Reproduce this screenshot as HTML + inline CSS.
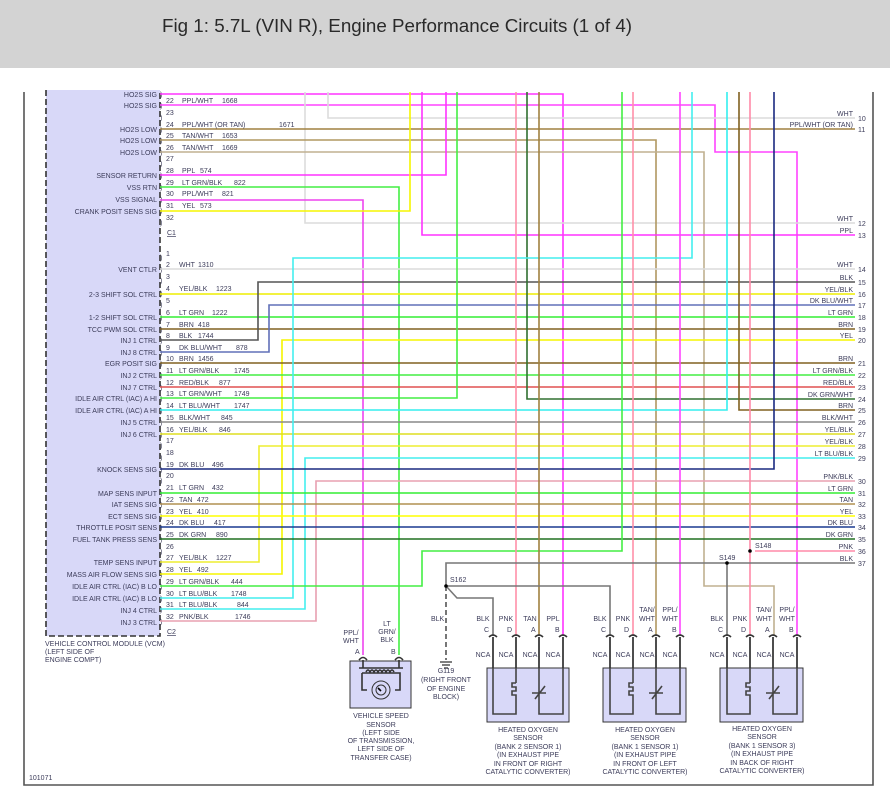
<!DOCTYPE html>
<html><head><meta charset="utf-8"><style>
body{margin:0;background:#fff;width:890px;height:801px;overflow:hidden}
.hd{position:absolute;left:0;top:0;width:890px;height:68px;background:#d3d3d3}
.hd span{position:absolute;left:162px;top:15px;font:18.8px "Liberation Sans",sans-serif;color:#2a2a2a}
svg{position:absolute;left:0;top:0}
text{font-family:"Liberation Sans",sans-serif;font-size:7px;fill:#3c3c5a}
.l{text-anchor:end;fill:#4a4a5a}
.c{text-anchor:middle}
.p{font-size:8px;fill:#333}
path{fill:none;stroke-width:1.6}
</style></head><body>
<div class="hd"><span>Fig 1: 5.7L (VIN R), Engine Performance Circuits (1 of 4)</span></div>
<svg width="890" height="801" viewBox="0 0 890 801">
<rect x="46" y="90" width="114" height="546" fill="#d8d8f8"/>
<path d="M46 90V636H160V90" stroke="#333" stroke-width="1.3" stroke-dasharray="6,3"/>
<path d="M24 92V785H873V92" stroke="#555" stroke-width="1"/>
<g class="p">
<text x="160" y="97">)</text><text x="160" y="108">)</text><text x="160" y="120">)</text><text x="160" y="132">)</text><text x="160" y="143">)</text><text x="160" y="155">)</text><text x="160" y="166">)</text><text x="160" y="178">)</text><text x="160" y="190">)</text><text x="160" y="202">)</text><text x="160" y="213">)</text><text x="160" y="225">)</text>
<text x="160" y="260">)</text><text x="160" y="272">)</text><text x="160" y="283">)</text><text x="160" y="296">)</text><text x="160" y="307">)</text><text x="160" y="320">)</text><text x="160" y="332">)</text><text x="160" y="343">)</text><text x="160" y="355">)</text><text x="160" y="366">)</text><text x="160" y="378">)</text><text x="160" y="390">)</text><text x="160" y="401">)</text><text x="160" y="413">)</text><text x="160" y="425">)</text><text x="160" y="437">)</text><text x="160" y="448">)</text><text x="160" y="460">)</text><text x="160" y="472">)</text><text x="160" y="483">)</text><text x="160" y="496">)</text><text x="160" y="507">)</text><text x="160" y="519">)</text><text x="160" y="530">)</text><text x="160" y="542">)</text><text x="160" y="554">)</text><text x="160" y="565">)</text><text x="160" y="577">)</text><text x="160" y="589">)</text><text x="160" y="601">)</text><text x="160" y="612">)</text><text x="160" y="624">)</text>
</g>
<g>
<path d="M160 94H563V635" stroke="#ff33ff" stroke-width="2.2"/>
<path d="M160 105H715V152H797V635" stroke="#ff44ff"/>
<path d="M328 92V118H855" stroke="#dcdcdc" stroke-width="2"/>
<path d="M305 92V223H855" stroke="#dcdcdc" stroke-width="2"/>
<path d="M160 129H855" stroke="#a08040"/>
<path d="M160 140H656V635" stroke="#b09860"/>
<path d="M160 152H704V586H774V635" stroke="#c0b090"/>
<path d="M160 175H446V92" stroke="#ff33ff"/>
<path d="M422 92V235H855" stroke="#ff33ff" stroke-width="2.2"/>
<path d="M160 187H399V655" stroke="#44ee44" stroke-width="2"/>
<path d="M160 200H363V655" stroke="#ee44ee"/>
<path d="M160 211H410V92" stroke="#f5f500" stroke-width="2"/>
<path d="M160 269H855" stroke="#dcdcdc" stroke-width="2"/>
<path d="M160 294H855" stroke="#eeee00" stroke-width="2"/>
<path d="M160 317H855" stroke="#33ee33" stroke-width="2.2"/>
<path d="M160 329H855" stroke="#806020"/>
<path d="M160 340H258V282H855" stroke="#555"/>
<path d="M160 352H269V305H855" stroke="#6070b8" stroke-width="2"/>
<path d="M160 574H282V340H855" stroke="#f5f500" stroke-width="2"/>
<path d="M160 363H855" stroke="#806020" stroke-width="2"/>
<path d="M160 375H855" stroke="#44ee44" stroke-width="2"/>
<path d="M160 387H855" stroke="#e05050" stroke-width="2"/>
<path d="M160 398H457V92" stroke="#44ee44" stroke-width="2"/>
<path d="M855 399H527V92" stroke="#307030"/>
<path d="M160 410H727V92" stroke="#33eeee" stroke-width="2"/>
<path d="M855 410H739V92" stroke="#806020" stroke-width="2"/>
<path d="M160 422H855" stroke="#888"/>
<path d="M160 434H855" stroke="#dddd20" stroke-width="2"/>
<path d="M160 562H259V446H855" stroke="#eeee30" stroke-width="2"/>
<path d="M160 598H293V258H692V92" stroke="#44eeee" stroke-width="2"/>
<path d="M160 609H305V458H855" stroke="#44eeee" stroke-width="2"/>
<path d="M160 469H774V92" stroke="#1a2a80" stroke-width="2"/>
<path d="M160 621H316V481H855" stroke="#e8a0b0" stroke-width="2"/>
<path d="M160 493H855" stroke="#33ee33" stroke-width="2"/>
<path d="M160 504H855" stroke="#b09050"/>
<path d="M160 516H855" stroke="#ffff00" stroke-width="2"/>
<path d="M160 527H855" stroke="#1a3a90" stroke-width="2"/>
<path d="M160 539H855" stroke="#207020" stroke-width="2"/>
<path d="M160 586H422V551H622V92" stroke="#44ee44" stroke-width="2"/>
<path d="M516 92V635" stroke="#ff90a8" stroke-width="2"/>
<path d="M539 92V635" stroke="#a08040" stroke-width="2"/>
<path d="M633 92V635" stroke="#ff90a8" stroke-width="2"/>
<path d="M680 92V635" stroke="#ff44ff" stroke-width="2"/>
<path d="M750 92V635M755 551H855" stroke="#ff8aa8" stroke-width="2"/>
<path d="M446 586V563H855M727 563V635M446 586H610V635M446 586L457 598H493V635" stroke="#777" stroke-width="2"/>
<path d="M446 586V660" stroke="#555" stroke-width="1.5" stroke-dasharray="5,3"/>
<circle cx="446" cy="586" r="1.8" fill="#000"/><circle cx="727" cy="563" r="1.8" fill="#000"/><circle cx="750" cy="551" r="1.8" fill="#000"/>
<path d="M440 662H452M442 665H450M444 668H448" stroke="#555" stroke-width="1"/>
</g>
<g class="l">
<text x="157" y="97">HO2S SIG</text><text x="157" y="108">HO2S SIG</text>
<text x="157" y="132">HO2S LOW</text><text x="157" y="143">HO2S LOW</text><text x="157" y="155">HO2S LOW</text>
<text x="157" y="178">SENSOR RETURN</text><text x="157" y="190">VSS RTN</text><text x="157" y="202">VSS SIGNAL</text><text x="157" y="214">CRANK POSIT SENS SIG</text>
<text x="157" y="272">VENT CTLR</text><text x="157" y="297">2-3 SHIFT SOL CTRL</text><text x="157" y="320">1-2 SHIFT SOL CTRL</text><text x="157" y="332">TCC PWM SOL CTRL</text><text x="157" y="343">INJ 1 CTRL</text><text x="157" y="355">INJ 8 CTRL</text><text x="157" y="366">EGR POSIT SIG</text><text x="157" y="378">INJ 2 CTRL</text><text x="157" y="390">INJ 7 CTRL</text><text x="157" y="401">IDLE AIR CTRL (IAC) A HI</text><text x="157" y="413">IDLE AIR CTRL (IAC) A HI</text><text x="157" y="425">INJ 5 CTRL</text><text x="157" y="437">INJ 6 CTRL</text><text x="157" y="472">KNOCK SENS SIG</text><text x="157" y="496">MAP SENS INPUT</text><text x="157" y="507">IAT SENS SIG</text><text x="157" y="519">ECT SENS SIG</text><text x="157" y="530">THROTTLE POSIT SENS</text><text x="157" y="542">FUEL TANK PRESS SENS</text><text x="157" y="565">TEMP SENS INPUT</text><text x="157" y="577">MASS AIR FLOW SENS SIG</text><text x="157" y="589">IDLE AIR CTRL (IAC) B LO</text><text x="157" y="601">IDLE AIR CTRL (IAC) B LO</text><text x="157" y="613">INJ 4 CTRL</text><text x="157" y="625">INJ 3 CTRL</text>
</g>
<g>
<text x="166" y="103">22</text><text x="182" y="103">PPL/WHT</text><text x="222" y="103">1668</text>
<text x="166" y="115">23</text>
<text x="166" y="127">24</text><text x="182" y="127">PPL/WHT (OR TAN)</text><text x="279" y="127">1671</text>
<text x="166" y="138">25</text><text x="182" y="138">TAN/WHT</text><text x="222" y="138">1653</text>
<text x="166" y="150">26</text><text x="182" y="150">TAN/WHT</text><text x="222" y="150">1669</text>
<text x="166" y="161">27</text>
<text x="166" y="173">28</text><text x="182" y="173">PPL</text><text x="200" y="173">574</text>
<text x="166" y="185">29</text><text x="182" y="185">LT GRN/BLK</text><text x="234" y="185">822</text>
<text x="166" y="196">30</text><text x="182" y="196">PPL/WHT</text><text x="222" y="196">821</text>
<text x="166" y="208">31</text><text x="182" y="208">YEL</text><text x="200" y="208">573</text>
<text x="166" y="220">32</text>
<text x="167" y="235" text-decoration="underline">C1</text>
<text x="166" y="256">1</text>
<text x="166" y="267">2</text><text x="179" y="267">WHT</text><text x="198" y="267">1310</text>
<text x="166" y="279">3</text>
<text x="166" y="291">4</text><text x="179" y="291">YEL/BLK</text><text x="216" y="291">1223</text>
<text x="166" y="303">5</text>
<text x="166" y="315">6</text><text x="179" y="315">LT GRN</text><text x="212" y="315">1222</text>
<text x="166" y="327">7</text><text x="179" y="327">BRN</text><text x="198" y="327">418</text>
<text x="166" y="338">8</text><text x="179" y="338">BLK</text><text x="198" y="338">1744</text>
<text x="166" y="350">9</text><text x="179" y="350">DK BLU/WHT</text><text x="236" y="350">878</text>
<text x="166" y="361">10</text><text x="179" y="361">BRN</text><text x="198" y="361">1456</text>
<text x="166" y="373">11</text><text x="179" y="373">LT GRN/BLK</text><text x="234" y="373">1745</text>
<text x="166" y="385">12</text><text x="179" y="385">RED/BLK</text><text x="219" y="385">877</text>
<text x="166" y="396">13</text><text x="179" y="396">LT GRN/WHT</text><text x="234" y="396">1749</text>
<text x="166" y="408">14</text><text x="179" y="408">LT BLU/WHT</text><text x="234" y="408">1747</text>
<text x="166" y="420">15</text><text x="179" y="420">BLK/WHT</text><text x="221" y="420">845</text>
<text x="166" y="432">16</text><text x="179" y="432">YEL/BLK</text><text x="219" y="432">846</text>
<text x="166" y="443">17</text><text x="166" y="455">18</text>
<text x="166" y="467">19</text><text x="179" y="467">DK BLU</text><text x="212" y="467">496</text>
<text x="166" y="478">20</text>
<text x="166" y="490">21</text><text x="179" y="490">LT GRN</text><text x="212" y="490">432</text>
<text x="166" y="502">22</text><text x="179" y="502">TAN</text><text x="197" y="502">472</text>
<text x="166" y="514">23</text><text x="179" y="514">YEL</text><text x="197" y="514">410</text>
<text x="166" y="525">24</text><text x="179" y="525">DK BLU</text><text x="214" y="525">417</text>
<text x="166" y="537">25</text><text x="179" y="537">DK GRN</text><text x="216" y="537">890</text>
<text x="166" y="549">26</text>
<text x="166" y="560">27</text><text x="179" y="560">YEL/BLK</text><text x="216" y="560">1227</text>
<text x="166" y="572">28</text><text x="179" y="572">YEL</text><text x="197" y="572">492</text>
<text x="166" y="584">29</text><text x="179" y="584">LT GRN/BLK</text><text x="231" y="584">444</text>
<text x="166" y="596">30</text><text x="179" y="596">LT BLU/BLK</text><text x="231" y="596">1748</text>
<text x="166" y="607">31</text><text x="179" y="607">LT BLU/BLK</text><text x="237" y="607">844</text>
<text x="166" y="619">32</text><text x="179" y="619">PNK/BLK</text><text x="235" y="619">1746</text>
<text x="167" y="634" text-decoration="underline">C2</text>
<text x="45" y="646">VEHICLE CONTROL MODULE (VCM)</text><text x="45" y="654">(LEFT SIDE OF</text><text x="45" y="662">ENGINE COMPT)</text>
<text x="29" y="780">101071</text>
</g>
<g class="l">
<text x="853" y="116">WHT</text><text x="853" y="127">PPL/WHT (OR TAN)</text><text x="853" y="221">WHT</text><text x="853" y="233">PPL</text>
<text x="853" y="267">WHT</text><text x="853" y="280">BLK</text><text x="853" y="292">YEL/BLK</text><text x="853" y="303">DK BLU/WHT</text><text x="853" y="315">LT GRN</text><text x="853" y="327">BRN</text><text x="853" y="338">YEL</text>
<text x="853" y="361">BRN</text><text x="853" y="373">LT GRN/BLK</text><text x="853" y="385">RED/BLK</text><text x="853" y="397">DK GRN/WHT</text><text x="853" y="408">BRN</text><text x="853" y="420">BLK/WHT</text><text x="853" y="432">YEL/BLK</text><text x="853" y="444">YEL/BLK</text><text x="853" y="456">LT BLU/BLK</text>
<text x="853" y="479">PNK/BLK</text><text x="853" y="491">LT GRN</text><text x="853" y="502">TAN</text><text x="853" y="514">YEL</text><text x="853" y="525">DK BLU</text><text x="853" y="537">DK GRN</text><text x="853" y="549">PNK</text><text x="853" y="561">BLK</text>
</g>
<g>
<text x="858" y="121">10</text><text x="858" y="132">11</text><text x="858" y="226">12</text><text x="858" y="238">13</text>
<text x="858" y="272">14</text><text x="858" y="285">15</text><text x="858" y="297">16</text><text x="858" y="308">17</text><text x="858" y="320">18</text><text x="858" y="332">19</text><text x="858" y="343">20</text>
<text x="858" y="366">21</text><text x="858" y="378">22</text><text x="858" y="390">23</text><text x="858" y="402">24</text><text x="858" y="413">25</text><text x="858" y="425">26</text><text x="858" y="437">27</text><text x="858" y="449">28</text><text x="858" y="461">29</text>
<text x="858" y="484">30</text><text x="858" y="496">31</text><text x="858" y="507">32</text><text x="858" y="519">33</text><text x="858" y="530">34</text><text x="858" y="542">35</text><text x="858" y="554">36</text><text x="858" y="566">37</text>
<text x="755" y="548">S148</text><text x="719" y="560">S149</text><text x="450" y="582">S162</text>
<text x="431" y="621">BLK</text>
<text class="c" x="446" y="673">G119</text><text class="c" x="446" y="682">(RIGHT FRONT</text><text class="c" x="446" y="691">OF ENGINE</text><text class="c" x="446" y="699">BLOCK)</text>
</g>
<g>
<text class="c" x="351" y="635">PPL/</text><text class="c" x="351" y="643">WHT</text>
<text class="c" x="387" y="626">LT</text><text class="c" x="387" y="634">GRN/</text><text class="c" x="387" y="642">BLK</text>
<text x="355" y="654">A</text><text x="391" y="654">B</text>
<path d="M359 660Q363 655 367 660M395 660Q399 655 403 660" stroke="#333" stroke-width="1"/>
<rect x="350" y="661" width="61" height="47" fill="#d8d8f8" stroke="#333" stroke-width="1"/>
<path d="M363 660V668M399 660V668M359 668H403M362 673H400V690H395M362 673V690H367" stroke="#333" stroke-width="1"/>
<path d="M366 672q2 -4 4 0q2 -4 4 0q2 -4 4 0q2 -4 4 0q2 -4 4 0q2 -4 4 0q2 -4 4 0" stroke="#333" stroke-width="1"/>
<circle cx="381" cy="690" r="9" fill="#d8d8f8" stroke="#333" stroke-width="1"/><circle cx="381" cy="690" r="5" fill="none" stroke="#333" stroke-width="1"/>
<path d="M378 688L381 691" stroke="#000" stroke-width="1.3"/>
<text class="c" x="381" y="718">VEHICLE SPEED</text><text class="c" x="381" y="727">SENSOR</text><text class="c" x="381" y="735">(LEFT SIDE</text><text class="c" x="381" y="743">OF TRANSMISSION,</text><text class="c" x="381" y="751">LEFT SIDE OF</text><text class="c" x="381" y="760">TRANSFER CASE)</text>
</g>
<g>
<text class="c" x="483" y="621">BLK</text><text class="c" x="506" y="621">PNK</text><text class="c" x="530" y="621">TAN</text><text class="c" x="553" y="621">PPL</text>
<text x="484" y="632">C</text><text x="507" y="632">D</text><text x="531" y="632">A</text><text x="555" y="632">B</text>
<path d="M489 637Q493 633 497 637M512 637Q516 633 520 637M535 637Q539 633 543 637M559 637Q563 633 567 637" stroke="#333" stroke-width="1"/>
<path d="M493 637V668M516 637V668M539 637V668M563 637V668" stroke="#222" stroke-width="1.5"/>
<text class="c" x="483" y="657">NCA</text><text class="c" x="506" y="657">NCA</text><text class="c" x="530" y="657">NCA</text><text class="c" x="553" y="657">NCA</text>
<rect x="487" y="668" width="82" height="54" fill="#d8d8f8" stroke="#333" stroke-width="1"/>
<path d="M493 668V714H516V700M516 668V683M516 683h-4v4h4v4h-4v4h4v5M539 668V714H563V668M532 693H546M535 699L545 686" stroke="#444" stroke-width="1"/>
<text class="c" x="528" y="732">HEATED OXYGEN</text><text class="c" x="528" y="740">SENSOR</text><text class="c" x="528" y="749">(BANK 2 SENSOR 1)</text><text class="c" x="528" y="757">(IN EXHAUST PIPE</text><text class="c" x="528" y="766">IN FRONT OF RIGHT</text><text class="c" x="528" y="774">CATALYTIC CONVERTER)</text>
</g>
<g transform="translate(117,0)">
<text class="c" x="483" y="621">BLK</text><text class="c" x="506" y="621">PNK</text><text class="c" x="530" y="612">TAN/</text><text class="c" x="530" y="621">WHT</text><text class="c" x="553" y="612">PPL/</text><text class="c" x="553" y="621">WHT</text>
<text x="484" y="632">C</text><text x="507" y="632">D</text><text x="531" y="632">A</text><text x="555" y="632">B</text>
<path d="M489 637Q493 633 497 637M512 637Q516 633 520 637M535 637Q539 633 543 637M559 637Q563 633 567 637" stroke="#333" stroke-width="1"/>
<path d="M493 637V668M516 637V668M539 637V668M563 637V668" stroke="#222" stroke-width="1.5"/>
<text class="c" x="483" y="657">NCA</text><text class="c" x="506" y="657">NCA</text><text class="c" x="530" y="657">NCA</text><text class="c" x="553" y="657">NCA</text>
<rect x="486" y="668" width="83" height="54" fill="#d8d8f8" stroke="#333" stroke-width="1"/>
<path d="M493 668V714H516V700M516 668V683M516 683h-4v4h4v4h-4v4h4v5M539 668V714H563V668M532 693H546M535 699L545 686" stroke="#444" stroke-width="1"/>
<text class="c" x="528" y="732">HEATED OXYGEN</text><text class="c" x="528" y="740">SENSOR</text><text class="c" x="528" y="749">(BANK 1 SENSOR 1)</text><text class="c" x="528" y="757">(IN EXHAUST PIPE</text><text class="c" x="528" y="766">IN FRONT OF LEFT</text><text class="c" x="528" y="774">CATALYTIC CONVERTER)</text>
</g>
<g transform="translate(234,0)">
<text class="c" x="483" y="621">BLK</text><text class="c" x="506" y="621">PNK</text><text class="c" x="530" y="612">TAN/</text><text class="c" x="530" y="621">WHT</text><text class="c" x="553" y="612">PPL/</text><text class="c" x="553" y="621">WHT</text>
<text x="484" y="632">C</text><text x="507" y="632">D</text><text x="531" y="632">A</text><text x="555" y="632">B</text>
<path d="M489 637Q493 633 497 637M512 637Q516 633 520 637M535 637Q539 633 543 637M559 637Q563 633 567 637" stroke="#333" stroke-width="1"/>
<path d="M493 637V668M516 637V668M539 637V668M563 637V668" stroke="#222" stroke-width="1.5"/>
<text class="c" x="483" y="657">NCA</text><text class="c" x="506" y="657">NCA</text><text class="c" x="530" y="657">NCA</text><text class="c" x="553" y="657">NCA</text>
<rect x="486" y="668" width="83" height="54" fill="#d8d8f8" stroke="#333" stroke-width="1"/>
<path d="M493 668V714H516V700M516 668V683M516 683h-4v4h4v4h-4v4h4v5M539 668V714H563V668M532 693H546M535 699L545 686" stroke="#444" stroke-width="1"/>
<text class="c" x="528" y="731">HEATED OXYGEN</text><text class="c" x="528" y="739">SENSOR</text><text class="c" x="528" y="748">(BANK 1 SENSOR 3)</text><text class="c" x="528" y="756">(IN EXHAUST PIPE</text><text class="c" x="528" y="765">IN BACK OF RIGHT</text><text class="c" x="528" y="773">CATALYTIC CONVERTER)</text>
</g>
</svg>
</body></html>
